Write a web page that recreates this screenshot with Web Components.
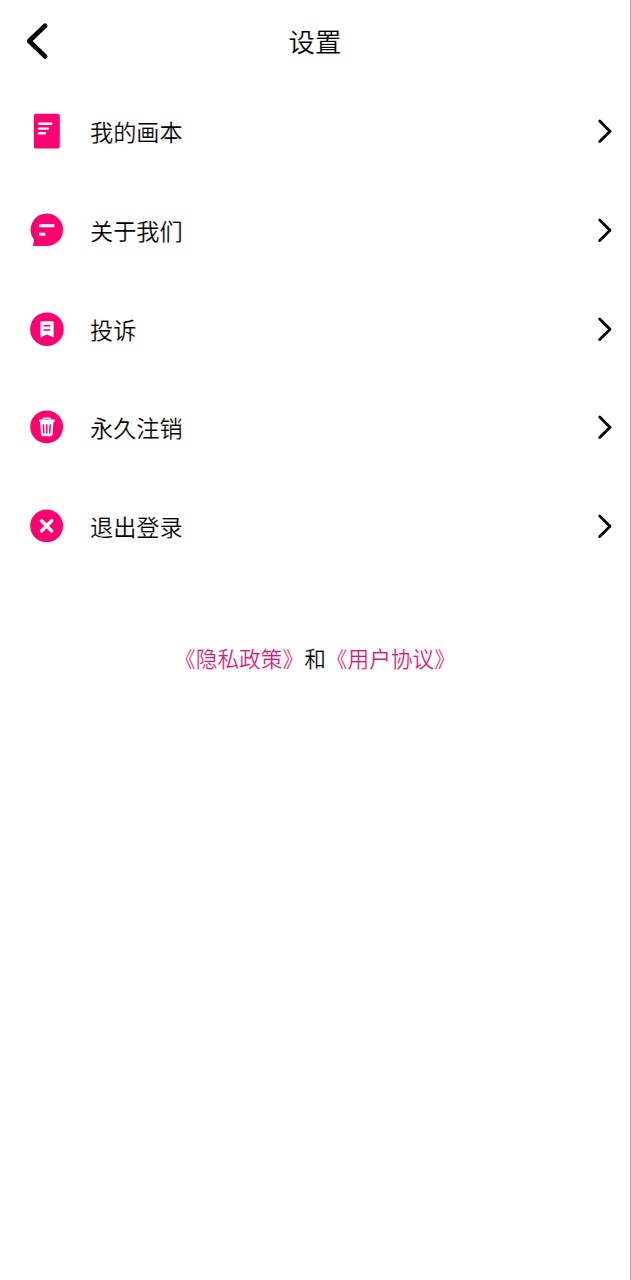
<!DOCTYPE html>
<html lang="zh-CN">
<head>
<meta charset="utf-8">
<title>设置</title>
<style>
    body {
        margin: 0;
        background: #fff;
        color: #000;
        font-family: "Noto Sans CJK SC", "Noto Sans", sans-serif;
        /* a thin white outline keeps the strokes of the text slim */
        -webkit-text-stroke: 0.2px #fff;
    }
</style>
</head>
<body>
<settings-page>
    <nav-bar slot="header">设置</nav-bar>
    <settings-item icon="book">我的画本</settings-item>
    <settings-item icon="about">关于我们</settings-item>
    <settings-item icon="report">投诉</settings-item>
    <settings-item icon="trash">永久注销</settings-item>
    <settings-item icon="exit">退出登录</settings-item>
    <policy-links slot="footer"></policy-links>
</settings-page>

<script>
const icons = {
    book: `
        <rect x="4.8" y="0.8" width="26" height="34.8" rx="2.2" fill="#ff0070"/>
        <path d="M10 10.8H22.3M10 15.6H19M10 20.3H16" stroke="#fff" stroke-width="2.4" stroke-linecap="round"/>`,
    about: `
        <path d="M17.7 1.5A16.3 16.3 0 0 1 17.7 34.1H5.4Q3.4 34.1 4.3 32.2L5 27.7A16.3 16.3 0 0 1 17.7 1.5Z" fill="#ff0070"/>
        <path d="M10 13.8H25.4M10 22.2H16.3" stroke="#fff" stroke-width="2.9"/>`,
    report: `
        <circle cx="17.9" cy="18.2" r="16.8" fill="#ff0070"/>
        <path d="M12.6 10.2H23.4Q24.6 10.2 24.6 11.4V26.6L18 23.4L11.4 26.6V11.4Q11.4 10.2 12.6 10.2Z" fill="#fff"/>
        <path d="M14.5 14.7H21.4M14.5 19H21.4" stroke="#ff0070" stroke-width="1.5"/>`,
    trash: `
        <circle cx="17.6" cy="17.9" r="16.4" fill="#ff0070"/>
        <path d="M14.6 10.6V9.3H21V10.6" fill="none" stroke="#fff" stroke-width="1.5"/>
        <path d="M10 10.4H25.6V13H10Z" fill="#fff"/>
        <path d="M11.1 13H24.5L23.5 25.5Q23.3 27.2 21.7 27.2H13.9Q12.3 27.2 12.1 25.5Z" fill="#fff"/>
        <path d="M14.4 15.3L14.9 24.5M17.8 15.3V24.5M21.2 15.3L20.7 24.5" stroke="#ff0070" stroke-width="1.5"/>`,
    exit: `
        <circle cx="17.6" cy="17.9" r="16.4" fill="#ff0070"/>
        <path d="M12.5 12.8L22.7 23M22.7 12.8L12.5 23" stroke="#fff" stroke-width="3.4" stroke-linecap="round"/>`
}

class SettingsPage extends HTMLElement {
    constructor() {
        super()
        this.attachShadow({ mode: 'open' })
        this.shadowRoot.innerHTML = `
            <style>
                :host {
                    display: flex;
                    flex-direction: column;
                    box-sizing: border-box;
                    height: 100vh;
                    border-right: 1px solid #a6a6a6;
                    overflow: hidden;
                }
                main {
                    display: flex;
                    flex-direction: column;
                }
            </style>
            <slot name="header"></slot>
            <main><slot></slot></main>
            <slot name="footer"></slot>
        `
    }
}

class NavBar extends HTMLElement {
    constructor() {
        super()
        this.attachShadow({ mode: 'open' })
        this.shadowRoot.innerHTML = `
            <style>
                :host {
                    display: grid;
                    grid-template-columns: 60px 1fr 60px;
                    align-items: center;
                    height: 82px;
                    flex: none;
                }
                svg {
                    display: block;
                    margin-left: 25px;
                }
                h1 {
                    margin: 0;
                    font-size: 26.4px;
                    font-weight: 400;
                    line-height: 38px;
                    text-align: center;
                }
            </style>
            <svg width="24" height="38" viewBox="0 0 24 38" fill="none">
                <path d="M20.1 3.7L4.2 19L20.1 34.4" stroke="#000" stroke-width="4.7" stroke-linecap="round" stroke-linejoin="round"/>
            </svg>
            <h1><slot></slot></h1>
        `
    }
}

class SettingsItem extends HTMLElement {
    constructor() {
        super()
        this.attachShadow({ mode: 'open' })
        this.shadowRoot.innerHTML = `
            <style>
                :host {
                    display: flex;
                    align-items: center;
                    box-sizing: border-box;
                    height: 98.7px;
                    padding: 0 17px 0 29px;
                    cursor: pointer;
                }
                svg {
                    display: block;
                    flex: none;
                }
                .label {
                    flex: 1;
                    margin-left: 25px;
                    font-size: 23.2px;
                    line-height: 34px;
                }
            </style>
            <svg class="icon" width="36" height="36" viewBox="0 0 36 36">${icons[this.getAttribute('icon')]}</svg>
            <span class="label"><slot></slot></span>
            <svg width="16" height="26" viewBox="0 0 16 26" fill="none">
                <path d="M2.7 3.1L13 13.3L2.7 23.4" stroke="#000" stroke-width="2.8" stroke-linecap="round" stroke-linejoin="round"/>
            </svg>
        `
    }
}

class PolicyLinks extends HTMLElement {
    constructor() {
        super()
        this.attachShadow({ mode: 'open' })
        this.shadowRoot.innerHTML = `
            <style>
                :host {
                    display: flex;
                    justify-content: center;
                    margin-top: 67px;
                    font-size: 21.7px;
                    line-height: 32px;
                }
                a {
                    color: #d9157a;
                    text-decoration: none;
                }
            </style>
            <a href="#privacy">《隐私政策》</a><span>和</span><a href="#terms">《用户协议》</a>
        `
    }
}

customElements.define('settings-page', SettingsPage)
customElements.define('nav-bar', NavBar)
customElements.define('settings-item', SettingsItem)
customElements.define('policy-links', PolicyLinks)
</script>
</body>
</html>
